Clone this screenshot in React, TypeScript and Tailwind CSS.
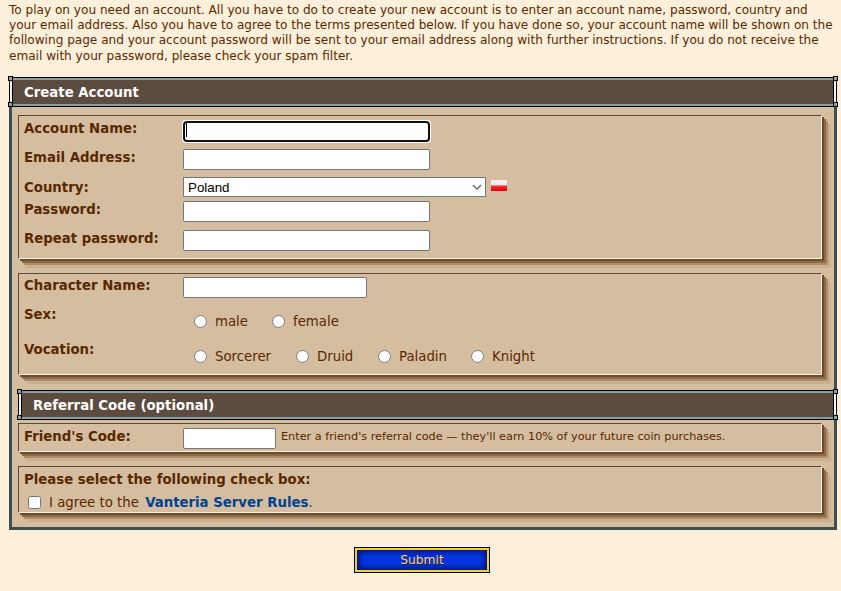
import React from 'react';

const panelClass =
  'ml-[6px] mr-[12px] border border-t-[#5f4a36] border-l-[#5f4a36] border-b-[#fff5e0] border-r-[#fff5e0] bg-[#d4be9f] shadow-[2px_2px_0_#6f4a2b,4px_4px_0_#8d6a48,6px_6px_0_#ad8c6a,9px_9px_0_#c9b08f]';
const inputClass = 'h-[21px] rounded-[2px] border border-[#767676] bg-white px-[2px] text-[13px] text-black';
const labelClass = 'w-[159px] shrink-0 text-[13.3px] font-bold leading-[15px] text-[#5a2800]';
const optionClass = 'flex items-center text-[13.3px] text-[#5a2800]';

function Corner({ className }: { className: string }) {
  return <div className={`absolute h-[5px] w-[5px] border border-black bg-[#8fa3a3] ${className}`} />;
}

function HeaderBar({ title, className }: { title: string; className: string }) {
  return (
    <div
      className={`relative h-[30px] border-x-[3px] border-y-[3px] border-x-[#f2f2ea] border-y-[#8b9c9c] bg-[#5c4b3f] outline outline-1 -outline-offset-1 outline-black ${className}`}
    >
      <div className="absolute inset-y-0 left-0 w-[1px] bg-black" />
      <div className="absolute inset-y-0 right-0 w-[1px] bg-black" />
      <Corner className="left-[-4px] top-[-4px]" />
      <Corner className="right-[-4px] top-[-4px]" />
      <Corner className="bottom-[-3px] left-[-4px]" />
      <Corner className="bottom-[-3px] right-[-4px]" />
      <div className="text-[13.3px] font-bold leading-[25px] text-white">{title}</div>
    </div>
  );
}

function Radio({ label, name, className }: { label: string; name: string; className: string }) {
  return (
    <label className={`${optionClass} ${className}`}>
      <input type="radio" name={name} className="m-0 h-[13px] w-[13px]" />
      <span className="ml-[8px]">{label}</span>
    </label>
  );
}

export default function App() {
  return (
    <div
      className="h-[591px] w-[841px] overflow-hidden bg-[#fdf0da] text-[#5a2800]"
      style={{ fontFamily: '"DejaVu Sans", Verdana, sans-serif' }}
    >
      <p className="ml-[9px] mr-[5px] pt-[3px] text-[12.08px] leading-[15.2px] text-[#5a2800]">
        To play on you need an account. All you have to do to create your new account is to enter an account name,
        password, country and your email address. Also you have to agree to the terms presented below. If you have done
        so, your account name will be shown on the following page and your account password will be sent to your email
        address along with further instructions. If you do not receive the email with your password, please check your
        spam filter.
      </p>

      <div className="ml-[9px] mt-[13px] h-[453px] w-[828px] border-x-[3px] border-b-[3px] border-[#3f4f50] bg-[#d4be9f]">
        <HeaderBar title="Create Account" className="mx-[-3px] pl-[12px]" />

        <div className={`${panelClass} mt-[8px] h-[144px] px-[5px] pt-[3px]`}>
          <div className="flex h-[30px] items-start">
            <div className={`${labelClass} pt-[2px]`}>Account Name:</div>
            <div className="relative">
              <input autoFocus className={`${inputClass} w-[247px]`} />
              <div className="absolute left-[3px] top-[3px] h-[15px] w-[1px] bg-black" />
            </div>
          </div>
          <div className="flex h-[28px] items-start">
            <div className={`${labelClass} pt-[1px]`}>Email Address:</div>
            <input className={`${inputClass} w-[247px]`} />
          </div>
          <div className="flex h-[24px] items-start">
            <div className={`${labelClass} pt-[3px]`}>Country:</div>
            <div className="relative">
              <select
                className="block h-[20px] w-[303px] appearance-none border border-[#767676] bg-white pl-[4px] text-[13.33px] text-black"
                style={{ fontFamily: '"Liberation Sans", Arial, sans-serif' }}
              >
                <option>Poland</option>
              </select>
              <svg className="absolute right-[4px] top-[7px]" width="10" height="6" viewBox="0 0 10 6" fill="none">
                <path d="M1 1l4 4 4-4" stroke="#6b6b6b" strokeWidth="1.5" />
              </svg>
            </div>
            <svg className="ml-[5px] mt-[3px]" width="16" height="11" viewBox="0 0 16 11">
              <defs>
                <linearGradient id="pl-red" x1="0" y1="0" x2="0" y2="1">
                  <stop offset="0" stopColor="#f8a0a0" />
                  <stop offset="0.3" stopColor="#f62020" />
                  <stop offset="1" stopColor="#e80010" />
                </linearGradient>
              </defs>
              <rect width="16" height="5" fill="#f2eeee" />
              <rect y="5" width="16" height="6" fill="url(#pl-red)" />
            </svg>
          </div>
          <div className="flex h-[29px] items-start">
            <div className={`${labelClass} pt-[1px]`}>Password:</div>
            <input className={`${inputClass} w-[247px]`} />
          </div>
          <div className="flex items-start">
            <div className={`${labelClass} pt-[1px]`}>Repeat password:</div>
            <input className={`${inputClass} w-[247px]`} />
          </div>
        </div>

        <div className={`${panelClass} mt-[14px] h-[102px] px-[5px] pt-[3px]`}>
          <div className="flex h-[29px] items-start">
            <div className={`${labelClass} pt-[1px]`}>Character Name:</div>
            <input className={`${inputClass} w-[184px]`} />
          </div>
          <div className="flex h-[35px] items-start">
            <div className={`${labelClass} pt-[1px]`}>Sex:</div>
            <div className="flex pt-[6px]">
              <Radio label="male" name="sex" className="ml-[11px] w-[78px]" />
              <Radio label="female" name="sex" className="" />
            </div>
          </div>
          <div className="flex items-start">
            <div className={`${labelClass} pt-[1px]`}>Vocation:</div>
            <div className="flex pt-[6px]">
              <Radio label="Sorcerer" name="voc" className="ml-[11px] w-[102px]" />
              <Radio label="Druid" name="voc" className="w-[82px]" />
              <Radio label="Paladin" name="voc" className="w-[93px]" />
              <Radio label="Knight" name="voc" className="" />
            </div>
          </div>
        </div>

        <HeaderBar title="Referral Code (optional)" className="ml-[6px] mr-[-3px] mt-[15px] pl-[12px]" />

        <div className={`${panelClass} mt-[3px] flex h-[29px] items-center px-[5px]`}>
          <div className={`${labelClass} pb-[2px]`}>Friend's Code:</div>
          <input className={`${inputClass} mt-[2px] w-[93px]`} />
          <span className="ml-[5px] text-[11.25px] text-[#5a2800]">
            Enter a friend's referral code — they'll earn 10% of your future coin purchases.
          </span>
        </div>

        <div className={`${panelClass} mt-[14px] h-[47px] px-[5px] pt-[4px]`}>
          <div className="text-[13.3px] font-bold leading-[18px]">Please select the following check box:</div>
          <label className="mt-[4px] flex items-center pl-[4px] text-[13.3px]">
            <input type="checkbox" className="m-0 h-[13px] w-[13px]" />
            <span className="ml-[8px]">
              I agree to the <span className="ml-[2px] font-bold text-[#004294]">Vanteria Server Rules</span>.
            </span>
          </label>
        </div>
      </div>

      <div className="mt-[18px] flex justify-center pl-[3px]">
        <button
          type="button"
          className="relative h-[24px] w-[134px] border-2 border-[#f7d31c] bg-[#0636e6] text-[12.3px] leading-[18px] text-[#ffd27f] shadow-[inset_0_0_6px_2px_#000f70] outline outline-1 outline-black [text-shadow:1px_1px_0_#222]"
          style={{ fontFamily: '"DejaVu Sans", Verdana, sans-serif' }}
        >
          Submit
        </button>
      </div>
    </div>
  );
}
